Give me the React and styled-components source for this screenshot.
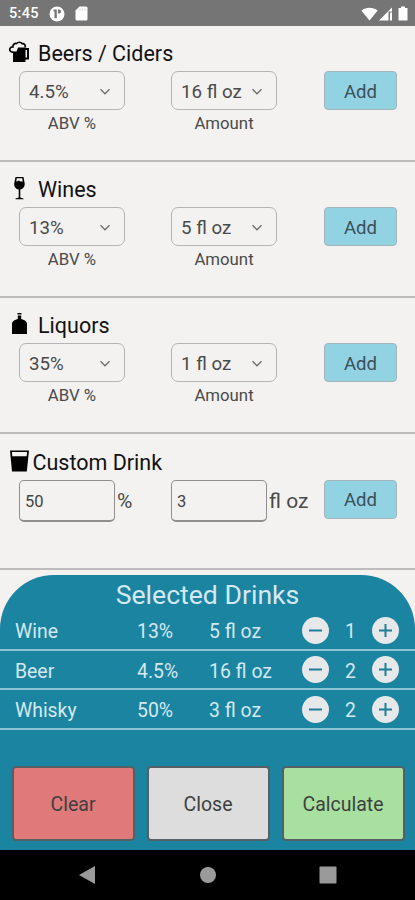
import React from "react";
import styled, { createGlobalStyle } from "styled-components";

const GlobalStyle = createGlobalStyle`
  * { box-sizing: border-box; }
  body { margin: 0; background: #f4f2f1; }
  button, input { font: inherit; margin: 0; }
`;

const Screen = styled.main`
  display: flex;
  flex-direction: column;
  width: 415px;
  height: 900px;
  overflow: hidden;
  background: #f4f2f1;
  font-family: Roboto, sans-serif;
  color: #4a4a4a;
`;

const StatusBar = styled.header`
  display: flex;
  align-items: center;
  flex: none;
  height: 25.5px;
  padding: 2px 7px 0 9px;
  background: #757575;
  color: #fff;
`;

const Clock = styled.span`
  width: 40px;
  font-size: 14.5px;
  font-weight: 500;
  letter-spacing: 0.3px;
`;

const StatusIcons = styled.div`
  display: flex;
  align-items: center;
  gap: ${(p) => p.$gap}px;
  margin-left: ${(p) => (p.$end ? "auto" : 0)};
`;

const Section = styled.section`
  flex: none;
  height: 136.2px;
  padding: 15px 0 0 8px;
  border-bottom: 2px solid #bdbbbb;
`;

const Heading = styled.h2`
  display: flex;
  align-items: center;
  height: 26px;
  margin: 0 0 4.5px;
  font-size: 21.5px;
  font-weight: 400;
  color: #111;
`;

const IconSlot = styled.span`
  display: flex;
  width: ${(p) => p.$width}px;
  height: 26px;
  padding-bottom: 3px;
  align-items: center;
`;

const Controls = styled.div`
  display: grid;
  grid-template-columns: 152px 153px 73px;
  padding-left: 11px;
  align-items: start;
`;

const Field = styled.label`
  display: flex;
  flex-direction: column;
  align-items: center;
  width: 106px;
`;

const Select = styled.button`
  display: flex;
  align-items: center;
  justify-content: space-between;
  width: 106px;
  height: 39px;
  padding: 2px 13px 0 9px;
  border: 1px solid #b5b5b5;
  border-radius: 7px;
  background: transparent;
  color: #4a4a4a;
  font-size: 18.7px;
  white-space: nowrap;
`;

const Caption = styled.span`
  margin-top: 3px;
  font-size: 16.8px;
  line-height: 20px;
`;

const AddButton = styled.button`
  height: 39px;
  padding: 2px 0 0;
  border: 1px solid #a5b4b9;
  border-radius: 4px;
  background: #91d3e3;
  color: #3c4f57;
  font-size: 18.6px;
`;

const Entry = styled.label`
  display: flex;
  align-items: center;
  gap: 2px;
  font-size: 21px;
  white-space: nowrap;
`;

const NumberInput = styled.input`
  width: 96px;
  height: 42px;
  padding: 2px 5px 0;
  border: 1px solid #8f8f8f;
  border-bottom-width: 2px;
  border-radius: 5px;
  background: transparent;
  color: #444;
  font-size: 16.5px;
  outline: none;
`;

const Panel = styled.section`
  display: flex;
  flex-direction: column;
  flex: none;
  height: 275px;
  margin-top: auto;
  border-radius: 54px 54px 0 0;
  background: #1a84a1;
  color: #d6e8f0;
`;

const PanelTitle = styled.h1`
  margin: 0;
  padding-top: 2px;
  height: 36px;
  font-size: 26.6px;
  line-height: 35px;
  font-weight: 400;
  text-align: center;
`;

const DrinkRow = styled.div`
  display: grid;
  grid-template-columns: 122px 72px 93px 27px 43px 27px;
  align-items: center;
  height: ${(p) => p.$height}px;
  padding: 0 0 0 15px;
  border-bottom: 2px solid #8fc3d4;
  font-size: 19.4px;
  white-space: nowrap;
`;

const Cell = styled.span`
  padding-top: 3px;
  text-align: ${(p) => (p.$center ? "center" : "left")};
`;

const RoundButton = styled.button`
  display: grid;
  place-items: center;
  width: 27px;
  height: 27px;
  padding: 0;
  border: 0;
  border-radius: 50%;
  background: #e6e8e9;
  color: #1a7f9c;
`;

const Actions = styled.div`
  display: grid;
  grid-template-columns: repeat(3, 123px);
  column-gap: 12px;
  margin-top: auto;
  padding: 0 0 9.5px 11.5px;
`;

const ActionButton = styled.button`
  height: 75px;
  padding: 2px 0 0;
  border: 2px solid #565f66;
  border-radius: 4px;
  background: ${(p) => p.$tone};
  color: #3f3f3f;
  font-size: 19.5px;
`;

const NavBar = styled.nav`
  display: grid;
  grid-template-columns: 18px 18px 18px;
  column-gap: 102px;
  align-items: center;
  justify-content: center;
  flex: none;
  height: 50px;
  background: #000;
  color: #9a9a9a;
`;

const Chevron = () => (
  <svg width="12" height="8" viewBox="0 0 12 8" fill="none" stroke="#707070" strokeWidth="1.5">
    <path d="M1.5 1.2 6 5.7l4.5-4.5" />
  </svg>
);

const Beer = () => (
  <svg width="22" height="24" viewBox="0 0 22 24">
    <path d="M5 9v13h12.500V7.500H10L8.500 11.500H5z" fill="#000" />
    <path
      d="M5.500 12.200C3 12.200 1.400 11 1.800 9 2 7.500 3.500 6.800 4.800 7 4.800 4.500 6.500 3.200 8.500 3.500 10 1.800 13 1.800 14.200 3.700 16.500 3.500 17.500 5 17.300 7.500"
      fill="none" stroke="#000" strokeWidth="1.700"
    />
    <path d="M16.500 9h3.500v9.500h-3.500" fill="none" stroke="#000" strokeWidth="2" />
  </svg>
);

const Wine = () => (
  <svg width="22" height="24" viewBox="0 0 22 24">
    <path d="M7.500 1h8l1.200 6.500c.3 3.300-1.900 5.700-4.400 6v8l3.200.9v.8h-8v-.8l3.200-.9v-8C8 13.200 5.900 10.800 6.200 7.500z" fill="#000" />
    <path d="M8.700 2.300h5.600l.4 3.300H8.300z" fill="#f4f2f1" />
    <path d="M9.500 4.800h2.500v1.200H9.500z" fill="#000" />
  </svg>
);

const Liquor = () => (
  <svg width="22" height="24" viewBox="0 0 22 24">
    <path d="M9.500 1h4v1.500h-4zM9.800 3.500h3.400V7c2.200.8 5.800 1.600 5.800 5v10H4V12c0-3.400 3.600-4.200 5.800-5z" fill="#000" />
  </svg>
);

const Glass = () => (
  <svg width="22" height="24" viewBox="0 0 22 24">
    <path d="M2 1.500h19L18.800 22.500H4z" fill="#000" />
    <path d="M3.900 3h15.200l-.5 4.200H4.300z" fill="#f4f2f1" />
  </svg>
);

const Sign = ({ plus }) => (
  <svg width="17" height="17" viewBox="0 0 17 17" stroke="currentColor" strokeWidth="2">
    <path d={plus ? "M2 8.500h13M8.500 2v13" : "M2 8.500h13"} />
  </svg>
);

const categories = [
  { name: "Beers / Ciders", icon: Beer, abv: "4.5%", amount: "16 fl oz" },
  { name: "Wines", icon: Wine, abv: "13%", amount: "5 fl oz" },
  { name: "Liquors", icon: Liquor, abv: "35%", amount: "1 fl oz" },
];

const drinks = [
  { name: "Wine", abv: "13%", amount: "5 fl oz", count: 1, height: 40 },
  { name: "Beer", abv: "4.5%", amount: "16 fl oz", count: 2, height: 39 },
  { name: "Whisky", abv: "50%", amount: "3 fl oz", count: 2, height: 40 },
];

export default function App() {
  return (
    <Screen>
      <GlobalStyle />
      <StatusBar>
        <Clock>5:45</Clock>
        <StatusIcons $gap={10}>
          <svg width="16" height="16" viewBox="0 0 16 16">
            <circle cx="8" cy="8" r="7.500" fill="#fff" />
            <path d="M4.500 3.500h3.300v8.700H5.500V5.500h-1zM9 3.500h1a2 2 0 0 1 0 4H9z" fill="#757575" />
          </svg>
          <svg width="13" height="15" viewBox="0 0 13 15">
            <path d="M4.500.5H11q1.500 0 1.500 1.500v11q0 1.500-1.500 1.500H2Q.5 14.500.5 13V4.500z" fill="#fff" />
            <path d="M5 2.500v2M7.500 2.500v2M10 2.500v2" stroke="#ccc" />
          </svg>
        </StatusIcons>
        <StatusIcons $gap={1} $end>
          <svg width="17" height="14" viewBox="0 0 17 14">
            <path d="M.3 3.500C5-.3 12-.3 16.700 3.500L8.500 13.500z" fill="#fff" />
          </svg>
          <svg width="18" height="14" viewBox="0 0 18 14">
            <path d="M0 13.500 13 .5v4H9.500v9zM11 5.500h2v8h-2z" fill="#fff" />
          </svg>
          <svg width="10" height="15" viewBox="0 0 10 15">
            <path d="M3 .5h4V2h2.500v12.500h-9V2H3z" fill="#fff" />
          </svg>
        </StatusIcons>
      </StatusBar>

      {categories.map(({ name, icon: Icon, abv, amount }) => (
        <Section key={name}>
          <Heading>
            <IconSlot $width={30}><Icon /></IconSlot>
            {name}
          </Heading>
          <Controls>
            <Field>
              <Select>{abv}<Chevron /></Select>
              <Caption>ABV %</Caption>
            </Field>
            <Field>
              <Select>{amount}<Chevron /></Select>
              <Caption>Amount</Caption>
            </Field>
            <AddButton>Add</AddButton>
          </Controls>
        </Section>
      ))}

      <Section>
        <Heading>
          <IconSlot $width={24.5}><Glass /></IconSlot>
          Custom Drink
        </Heading>
        <Controls>
          <Entry><NumberInput defaultValue="50" />%</Entry>
          <Entry><NumberInput defaultValue="3" />fl oz</Entry>
          <AddButton>Add</AddButton>
        </Controls>
      </Section>

      <Panel>
        <PanelTitle>Selected Drinks</PanelTitle>
        {drinks.map((d) => (
          <DrinkRow key={d.name} $height={d.height}>
            <Cell>{d.name}</Cell>
            <Cell>{d.abv}</Cell>
            <Cell>{d.amount}</Cell>
            <RoundButton aria-label="Decrease"><Sign /></RoundButton>
            <Cell $center>{d.count}</Cell>
            <RoundButton aria-label="Increase"><Sign plus /></RoundButton>
          </DrinkRow>
        ))}
        <Actions>
          <ActionButton $tone="#e07a7a">Clear</ActionButton>
          <ActionButton $tone="#dddddd">Close</ActionButton>
          <ActionButton $tone="#a8e0a0">Calculate</ActionButton>
        </Actions>
      </Panel>

      <NavBar>
        <svg width="18" height="20" viewBox="0 0 18 20"><path d="M0 10 16 1v18z" fill="currentColor" /></svg>
        <svg width="18" height="18" viewBox="0 0 18 18"><circle cx="9" cy="9" r="8" fill="currentColor" /></svg>
        <svg width="18" height="18" viewBox="0 0 18 18"><rect x=".5" y=".5" width="17" height="17" rx="1" fill="currentColor" /></svg>
      </NavBar>
    </Screen>
  );
}
